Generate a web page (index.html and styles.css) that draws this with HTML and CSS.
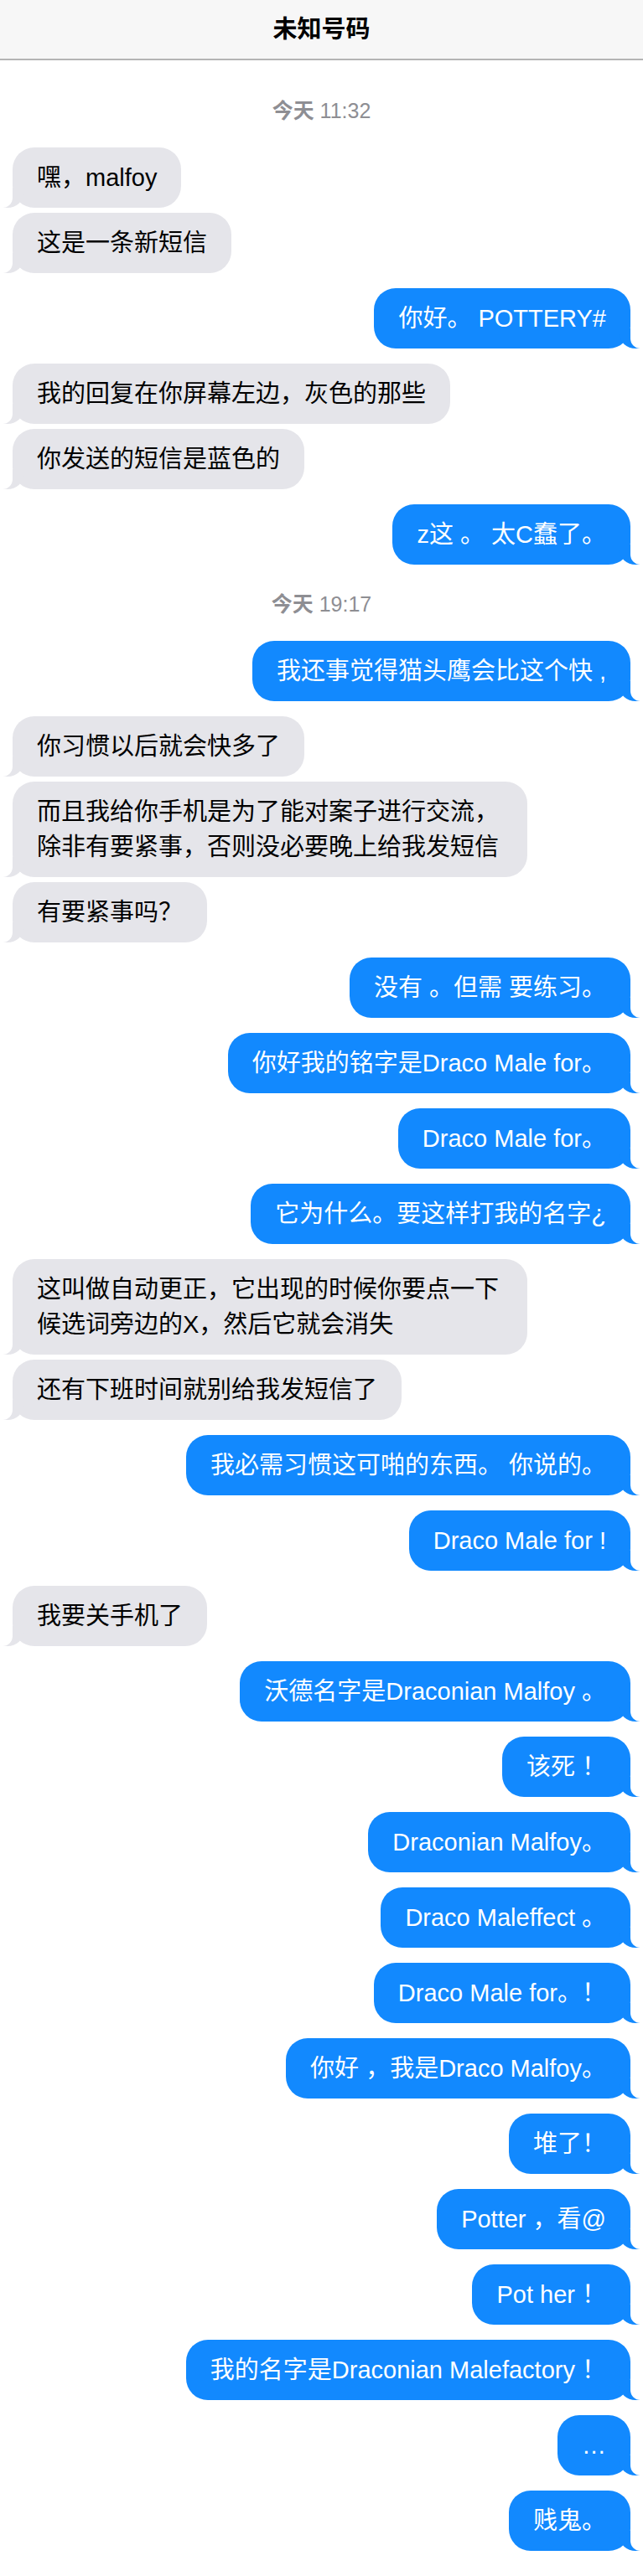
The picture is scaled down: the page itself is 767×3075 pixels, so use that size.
FILE: index.html
```
<!DOCTYPE html>
<html lang="zh-CN">
<head>
<meta charset="utf-8">
<title>未知号码</title>
<link rel="stylesheet" href="styles.css">
</head>
<body>
<header class="topbar"><h1 class="title">未知号码</h1></header>
<main class="thread">
  <div class="stamp"><b>今天</b> 11:32</div>
  <p class="msg in">嘿，malfoy</p>
  <p class="msg in">这是一条新短信</p>
  <p class="msg out">你好。 POTTERY#</p>
  <p class="msg in">我的回复在你屏幕左边，灰色的那些</p>
  <p class="msg in">你发送的短信是蓝色的</p>
  <p class="msg out">z这 。 太C蠢了。</p>
  <div class="stamp"><b>今天</b> 19:17</div>
  <p class="msg out">我还事觉得猫头鹰会比这个快 ,</p>
  <p class="msg in">你习惯以后就会快多了</p>
  <p class="msg in">而且我给你手机是为了能对案子进行交流，除非有要紧事，否则没必要晚上给我发短信</p>
  <p class="msg in">有要紧事吗？</p>
  <p class="msg out">没有 。但需 要练习。</p>
  <p class="msg out">你好我的铭字是Draco Male for。</p>
  <p class="msg out">Draco Male for。</p>
  <p class="msg out">它为什么。要这样打我的名字¿</p>
  <p class="msg in">这叫做自动更正，它出现的时候你要点一下候选词旁边的X，然后它就会消失</p>
  <p class="msg in">还有下班时间就别给我发短信了</p>
  <p class="msg out">我必需习惯这可啪的东西。 你说的。</p>
  <p class="msg out">Draco Male for !</p>
  <p class="msg in">我要关手机了</p>
  <p class="msg out">沃德名字是Draconian Malfoy 。</p>
  <p class="msg out">该死 ！</p>
  <p class="msg out">Draconian Malfoy。</p>
  <p class="msg out">Draco Maleffect 。</p>
  <p class="msg out">Draco Male for。！</p>
  <p class="msg out">你好 ，我是Draco Malfoy。</p>
  <p class="msg out">堆了！</p>
  <p class="msg out">Potter ，看@</p>
  <p class="msg out">Pot her ！</p>
  <p class="msg out">我的名字是Draconian Malefactory ！</p>
  <p class="msg out">…</p>
  <p class="msg out">贱鬼。</p>
</main>
</body>
</html>
```
FILE: styles.css
```
html, body {
  margin: 0;
  padding: 0;
  background: #ffffff;
}

body {
  font-family: "Liberation Sans", "Noto Sans CJK SC", sans-serif;
  color: #000000;
}

.topbar {
  height: 70px;
  background: #f7f7f7;
  border-bottom: 2px solid #b4b4b4;
  display: flex;
  align-items: center;
  justify-content: center;
}

.title {
  margin: 0;
  font-size: 29px;
  font-weight: 700;
  line-height: 40px;
}

.thread {
  display: flex;
  flex-direction: column;
  padding: 13px 15px 0;
}

.stamp {
  align-self: center;
  margin: 32px 0 29px;
  font-size: 25px;
  line-height: 30px;
  color: #8e8e93;
}

.stamp b {
  font-weight: 700;
}

.msg {
  position: relative;
  box-sizing: border-box;
  max-width: 614px;
  margin: 18px 0 0;
  padding: 15px 29px;
  font-size: 29px;
  line-height: 42px;
  border-radius: 26px;
}

.stamp + .msg {
  margin-top: 0;
}

.in + .in {
  margin-top: 6px;
}

.msg::before,
.msg::after {
  content: "";
  position: absolute;
  bottom: 0;
  height: 24px;
}

.in {
  align-self: flex-start;
  background: #e5e5ea;
  color: #000000;
}

.in::before {
  left: -11px;
  width: 24px;
  background: #e5e5ea;
  border-bottom-right-radius: 19px 17px;
}

.in::after {
  left: -16px;
  width: 16px;
  background: #ffffff;
  border-bottom-right-radius: 12px;
}

.out {
  align-self: flex-end;
  background: #1289fe;
  color: #ffffff;
}

.out::before {
  right: -11px;
  width: 24px;
  background: #1289fe;
  border-bottom-left-radius: 19px 17px;
}

.out::after {
  right: -16px;
  width: 16px;
  background: #ffffff;
  border-bottom-left-radius: 12px;
}
```
